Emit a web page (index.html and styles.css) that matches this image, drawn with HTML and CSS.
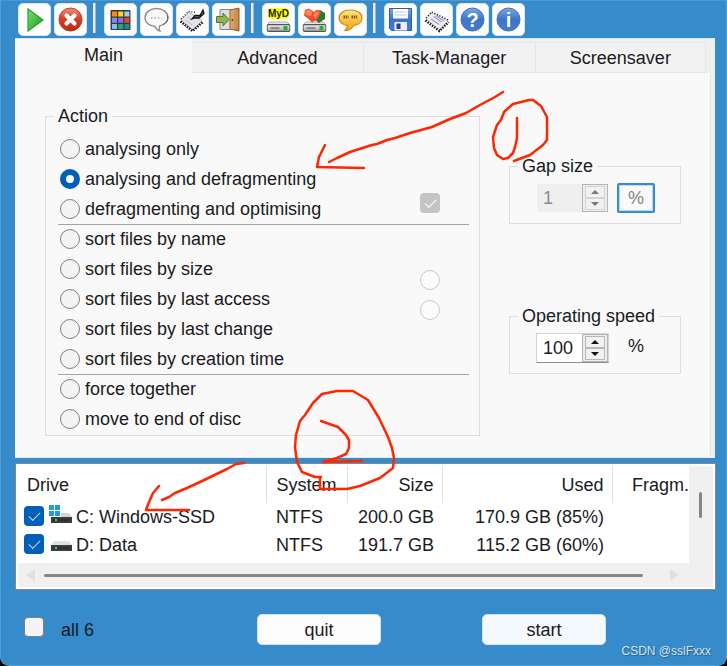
FILE: index.html
```html
<!DOCTYPE html>
<html lang="en">
<head>
<meta charset="utf-8">
<title>Defragmenter</title>
<link rel="stylesheet" href="styles.css">
</head>
<body>
<div class="window">
  <svg class="defs" aria-hidden="true">
    <defs>
      <linearGradient id="green" x2="1" y2="1"><stop stop-color="#7be07b"/><stop offset="1" stop-color="#129a16"/></linearGradient>
      <linearGradient id="red" x2="0" y2="1"><stop stop-color="#f0907c"/><stop offset=".5" stop-color="#d83a22"/><stop offset="1" stop-color="#c02a14"/></linearGradient>
      <linearGradient id="blue" x2="0" y2="1"><stop stop-color="#79a7e4"/><stop offset=".5" stop-color="#3c74c8"/><stop offset="1" stop-color="#3f7fd6"/></linearGradient>
      <linearGradient id="gold" x2="0" y2="1"><stop stop-color="#ffe489"/><stop offset="1" stop-color="#f5a300"/></linearGradient>
      <linearGradient id="wood" x2="1" y2="0"><stop stop-color="#e8b878"/><stop offset="1" stop-color="#b87838"/></linearGradient>
      <linearGradient id="metal" x2="0" y2="1"><stop stop-color="#f2f2f2"/><stop offset="1" stop-color="#a4a4a8"/></linearGradient>
      <symbol id="disk" viewBox="0 0 24 11">
        <path d="M3 1h18l2 3H1z" fill="#e4e4e6" stroke="#9a9a9e" stroke-width=".7"/>
        <rect x=".6" y="3.600" width="22.800" height="6.800" rx="1.500" fill="url(#metal)" stroke="#555" stroke-width="1.100"/>
        <path d="M4 7h9" stroke="#777" stroke-width="1.500"/><rect x="17" y="5" width="4" height="4" fill="#22b431"/>
      </symbol>
    </defs>
  </svg>

  <nav class="toolbar" aria-label="Tools">
    <button class="tool" aria-label="Start"><svg viewBox="0 0 27 27"><path d="M7 3v22L22 14z" fill="url(#green)" stroke="#2d9e32" stroke-width="1.200"/></svg></button>
    <button class="tool" aria-label="Stop"><svg viewBox="0 0 27 27"><circle cx="13.500" cy="13.500" r="11.500" fill="url(#red)" stroke="#b5432f"/><path d="M9.500 9.500l8 8m0-8l-8 8" stroke="#fff" stroke-width="4.200" stroke-linecap="round"/></svg></button>
    <span class="divider"></span>
    <button class="tool" aria-label="Colours"><svg viewBox="0 0 27 27"><rect x="3.500" y="4" width="20" height="20" rx="1" fill="#343842"/><path d="M5 5.500h5v5H5z" fill="#ff9000"/><path d="M11.200 5.500h5v5h-5z" fill="#ffd42a"/><path d="M17.400 5.500h5v5h-5z" fill="#a8ccd8"/><path d="M5 11.700h5v5H5z" fill="#7d8fe8"/><path d="M11.200 11.700h5v5h-5z" fill="#8b6fd8"/><path d="M17.400 11.700h5v5h-5z" fill="#e0452e"/><path d="M5 17.900h5v5H5z" fill="#82bdf0"/><path d="M11.200 17.900h5v5h-5z" fill="#2ba181"/><path d="M17.400 17.900h5v5h-5z" fill="#17907a"/></svg></button>
    <button class="tool" aria-label="Message"><svg viewBox="0 0 27 27"><path d="M13.500 2.500C7 2.500 2 6.500 2 11.500s4.500 8.700 10 9c1 2.500 2.500 4 5 4.500-1-1.700-1-3.500-.5-5C21.500 19 25 15.500 25 11.500c0-5-5-9-11.500-9z" fill="#f8f8f8" stroke="#8d8d8d" stroke-width="1.300"/><path d="M20 18.500c4-2 5.500-5 4.500-9" fill="none" stroke="#555"/><path d="M8 12h11" stroke="#aaa" stroke-width="1.500" stroke-dasharray="1.500 2"/></svg></button>
    <button class="tool" aria-label="Write report"><svg viewBox="0 0 27 27"><path d="M2 14L10 6l13 9-9 9z" fill="#e3e3ea" stroke="#888" stroke-width=".6"/><path d="M1.500 15.500L13.500 25l10-8.500" fill="none" stroke="#111" stroke-width="2.400" stroke-dasharray="1.500 1.200"/><path d="M2 13L9.500 5.500l7 1" fill="none" stroke="#333" stroke-width="1.400" stroke-dasharray="1 1.700"/><path d="M7 14l6 5m-4-8l4 3" stroke="#b5b5c4"/><path d="M13 13l3-3.500h5L24 4l1 3.500-5 4.500h-4z" fill="#666e94" stroke="#151515" stroke-width="1.300"/></svg></button>
    <button class="tool" aria-label="Exit"><svg viewBox="0 0 27 27"><path d="M5 3.500h16v20H5z" fill="#dedee0" stroke="#85858a"/><path d="M15 4l9-2v23l-9-2z" fill="url(#wood)" stroke="#91602f"/><path d="M17 6l5-1v16l-5-.5z" fill="none" stroke="#d79c5c"/><circle cx="17.500" cy="14" r="1" fill="#604020"/><path d="M1.500 10.500h6.500V7l6 6.500-6 6.500v-3.500H1.500z" fill="#8fb552" stroke="#557b24"/></svg></button>
    <span class="divider"></span>
    <button class="tool" aria-label="MyDefrag"><svg viewBox="0 0 27 27"><rect x="3" y="2" width="21" height="11" rx="4" fill="#ff0"/><text class="disk-name" x="13.500" y="11" text-anchor="middle">MyD</text><use href="#disk" x="1.500" y="15" width="24" height="11"/></svg></button>
    <button class="tool" aria-label="Defragment drive"><svg viewBox="0 0 27 27"><use href="#disk" x="1.500" y="15" width="24" height="11"/><path d="M15 6l4-2 5 3v6l-6 4-5-4z" fill="#2c7932"/><path d="M4 4l4-1.500L13 6l3-2.500 4 2.500-3 7-6 3.500-4-4-4-3z" fill="#f04c25"/><path d="M4.500 5l4-1.500 3 3-2 4-5-2zM12 9l4-4 2 2-4 6z" fill="#ff8564"/></svg></button>
    <button class="tool" aria-label="Comment"><svg viewBox="0 0 27 27"><path d="M13.500 4C6.500 4 2 7.500 2 12c0 3.800 4 7 8.500 7.600-.2 2-1 3.500-2.500 4.900 4-.2 7-2 8.500-5C21.500 19 25 16 25 12c0-4.500-4.500-8-11.500-8z" fill="url(#gold)" stroke="#d08a14" stroke-width="1.200"/><path d="M6.500 11h5m3 0h6" stroke="#8c6115" stroke-width="3" stroke-dasharray="1.500 .6"/></svg></button>
    <span class="divider"></span>
    <button class="tool" aria-label="Save"><svg viewBox="0 0 27 27"><path d="M2.500 2.500h22v22h-20l-2-2z" fill="url(#blue)" stroke="#2c5ca4"/><path d="M6 3h15v9.500H6z" fill="#fff"/><path d="M8 6h11M8 9h11" stroke="#b6cbe8"/><path d="M7.500 16H20v8.500H7.500z" fill="#ececf2"/><path d="M9.500 17.500h4V23h-4z" fill="#27457c"/></svg></button>
    <button class="tool" aria-label="Memory"><svg viewBox="0 0 27 27"><path d="M3 13L9 7l16 8-8 9z" fill="#eeeef0" stroke="#aaa" stroke-width=".6"/><path d="M2.500 14.500L16.500 25l9-9" fill="none" stroke="#111" stroke-width="2.400" stroke-dasharray="1.400 1.300"/><path d="M3 12L8.500 6l17 8" fill="none" stroke="#222" stroke-width="1.400" stroke-dasharray="1.200 1.600"/><path d="M8 13l8 5.500M10.500 10.500l8 5.500M13 10l8 5" stroke="#9c9ccc" stroke-width="1.300"/></svg></button>
    <button class="tool" aria-label="Help"><svg viewBox="0 0 27 27"><circle cx="13.500" cy="13.500" r="11.500" fill="url(#blue)" stroke="#4774b4"/><text class="glyph" x="13.500" y="20.500" text-anchor="middle">?</text></svg></button>
    <button class="tool" aria-label="Info"><svg viewBox="0 0 27 27"><circle cx="13.500" cy="13.500" r="11.500" fill="url(#blue)" stroke="#4774b4"/><text class="glyph" x="13.500" y="20.500" text-anchor="middle">i</text></svg></button>
  </nav>

  <main class="pane">
    <div class="tabs" role="tablist">
      <button class="tab active" role="tab" aria-selected="true">Main</button>
      <button class="tab" role="tab">Advanced</button>
      <button class="tab" role="tab">Task-Manager</button>
      <button class="tab" role="tab">Screensaver</button>
    </div>
    <div class="page">
      <fieldset class="action">
        <legend>Action</legend>
        <div class="group">
          <div class="choices">
            <label><input type="radio" name="action">analysing only</label>
            <label><input type="radio" name="action" checked>analysing and defragmenting</label>
            <label><input type="radio" name="action">defragmenting and optimising</label>
          </div>
          <div class="extra low"><input type="checkbox" checked disabled aria-label="Optimise option"></div>
        </div>
        <div class="group">
          <div class="choices">
            <label><input type="radio" name="action">sort files by name</label>
            <label><input type="radio" name="action">sort files by size</label>
            <label><input type="radio" name="action">sort files by last access</label>
            <label><input type="radio" name="action">sort files by last change</label>
            <label><input type="radio" name="action">sort files by creation time</label>
          </div>
          <div class="extra">
            <input type="radio" name="order" disabled aria-label="Ascending">
            <input type="radio" name="order" disabled aria-label="Descending">
          </div>
        </div>
        <div class="group">
          <div class="choices">
            <label><input type="radio" name="action">force together</label>
            <label><input type="radio" name="action">move to end of disc</label>
          </div>
        </div>
      </fieldset>
      <div class="settings">
        <fieldset class="setting">
          <legend>Gap size</legend>
          <div class="setting-row">
            <div class="spinner off">
              <input type="number" value="1" disabled aria-label="Gap size">
              <div class="steps"><button disabled aria-label="More"><i class="up"></i></button><button disabled aria-label="Less"><i class="down"></i></button></div>
            </div>
            <button class="percent" disabled>%</button>
          </div>
        </fieldset>
        <fieldset class="setting">
          <legend>Operating speed</legend>
          <div class="setting-row">
            <div class="spinner">
              <input type="number" value="100" aria-label="Operating speed">
              <div class="steps"><button aria-label="More"><i class="up"></i></button><button aria-label="Less"><i class="down"></i></button></div>
            </div>
            <span class="unit">%</span>
          </div>
        </fieldset>
      </div>
    </div>
  </main>

  <section class="drives">
    <div class="drives-body">
      <table>
        <colgroup><col><col class="c-system"><col class="c-size"><col class="c-used"><col class="c-fragm"></colgroup>
        <thead><tr><th>Drive</th><th>System</th><th class="num">Size</th><th class="num">Used</th><th class="last">Fragm.</th></tr></thead>
        <tbody>
          <tr>
            <td><label class="drive"><input type="checkbox" checked><svg viewBox="0 0 24 22"><path d="M0 1h5v5H0zm6 0h5v5H6zM0 7h5v5H0zm6 0h5v5H6z" fill="#1d9be8"/><path d="M12 9h8l3 4H12z" fill="#d4d4d4"/><rect x="2" y="13" width="21" height="6" fill="#3c3c3e"/><path d="M4 16h17" stroke="#202022"/><path d="M6 15h2v2H6z" fill="#45d34a"/></svg>C: Windows-SSD</label></td>
            <td>NTFS</td><td class="num">200.0 GB</td><td class="num">170.9 GB (85%)</td><td></td>
          </tr>
          <tr>
            <td><label class="drive"><input type="checkbox" checked><svg viewBox="0 0 24 22"><path d="M5 9h15l3 4H2z" fill="#e0e0e0"/><rect x="2" y="13" width="21" height="6" fill="#3c3c3e"/><path d="M4 16h17" stroke="#202022"/><path d="M6 15h2v2H6z" fill="#45d34a"/></svg>D: Data</label></td>
            <td>NTFS</td><td class="num">191.7 GB</td><td class="num">115.2 GB (60%)</td><td></td>
          </tr>
        </tbody>
      </table>
      <div class="vscroll"><div class="vthumb"></div></div>
    </div>
    <div class="hscroll"><i class="left"></i><div class="hthumb"></div><i class="right"></i></div>
  </section>

  <footer class="bottom">
    <label class="all"><input type="checkbox">all 6</label>
    <button class="push quit">quit</button>
    <button class="push start">start</button>
  </footer>

  <div class="watermark">CSDN @sslFxxx</div>

  <svg class="marks" viewBox="0 0 727 666" aria-hidden="true">
    <path d="M503 92L495 97 480 105 466 113 450 119 432 127 410 133 395 138 387 140 377 144 372 145 350 152 337 158 329 162"/>
    <path d="M325 145L319 157 317 167 364 168"/>
    <path d="M514 161L530 155 543 145 547 140V117L541 106 533 100H529L513 104 504 112 501 120 497 125 493 137 494 148 497 155 503 159 508 158 513 153 515 147 517 138V118"/>
    <path d="M244 463L236 464 227 469 200 482 187 488 175 493 169 497 162 500"/>
    <path d="M159 486L153 493 147 507 146 510H189"/>
    <path d="M321 421L338 427 346 435 349 440V448L346 454 337 458 323 462 362 461"/>
    <path d="M321 477L315 477 302 472 297 462 295 447 296 435 300 421 305 415 313 403 322 394 337 391H353L368 400 379 418 388 437 392 448 394 458 393 468 380 478 360 486 347 489H320V477"/>
  </svg>
</div>
</body>
</html>
```
FILE: styles.css
```css
* { box-sizing: border-box; }

html { background: #000; }

body {
  margin: 0;
  font: 18px/22px "Liberation Sans", Arial, sans-serif;
  color: #1a1a22;
}

button, input {
  font: inherit;
  color: inherit;
  margin: 0;
  padding: 0;
}

.window {
  position: relative;
  min-height: 100vh;
  overflow: hidden;
  background: #368bca;
  border: 1px solid #579ed3;
  border-top-color: #4b97d0;
  border-radius: 0 0 9px 9px;
  padding: 2px 10px 0 14px;
}

.defs { position: absolute; width: 0; height: 0; }

/* Toolbar */
.toolbar {
  display: flex;
  gap: 3px;
  height: 35px;
  padding-left: 3px;
}

.tool {
  width: 33px;
  height: 33px;
  padding: 2px;
  border: 1px solid #d9e4ee;
  border-radius: 5px;
  background: #fdfdfd;
}

.tool svg { display: block; width: 27px; height: 27px; }

.divider {
  width: 3px;
  height: 30px;
  margin: 0 5px 0 3px;
  background: #e8eef4;
  border-right: 1px solid #a9b3bc;
}

.glyph { font: bold 20px "Liberation Sans", Arial, sans-serif; fill: #fff; }
.disk-name { font: bold 10px "Liberation Sans", Arial, sans-serif; fill: #222; }

/* Tab pane */
.pane {
  margin-right: 1px;
  background: #f0f0f0;
  border-top: 1px solid #d5e6f3;
}

.tabs {
  display: grid;
  grid-template-columns: 177fr 171fr 172fr 170fr;
  padding-right: 9px;
  height: 34px;
}

.tab {
  margin-top: 3px;
  border: 0 solid #e6e6e6;
  border-width: 1px 1px 1px 0;
  background: #f2f2f2;
}

.tab.active {
  margin-top: 0;
  padding-bottom: 3px;
  border: 0;
  background: #f9f9f9;
}

.page {
  display: grid;
  grid-template-columns: 1fr 172px;
  gap: 29px;
  margin: 0 4px 3px 0;
  padding: 32px 29px 21px 30px;
  background: #f9f9f9;
  border-right: 1px solid #e6e6e6;
  border-bottom: 1px solid #e6e6e6;
}

fieldset {
  min-width: 0;
  margin: 0;
  padding: 0;
  border: 1px solid #dedede;
}

legend { padding: 0 4px; margin-left: 8px; }

.action { padding: 7px 0 1px; }

.group {
  display: flex;
  justify-content: space-between;
  margin: 0 10px 0 12px;
}

.group:not(:last-child) { box-shadow: 0 1px #a5a5a5; }

.choices label {
  display: flex;
  align-items: center;
  gap: 5px;
  height: 30px;
  padding-left: 2px;
}

.extra {
  display: flex;
  flex-direction: column;
  justify-content: center;
  gap: 10px;
  padding: 0 29px 8px 0;
}

.extra.low { justify-content: flex-end; padding-bottom: 11px; }

input[type="radio"], input[type="checkbox"] {
  appearance: none;
  flex: none;
  width: 20px;
  height: 20px;
  border: 1px solid #808080;
  background: #f4f4f4;
}

input[type="radio"] { border-radius: 50%; }
input[type="radio"]:checked { border: 6px solid #005fb8; background: #fff; }
input[type="radio"]:disabled { border-color: #c8c8c8; background: #fbfbfb; }

input[type="checkbox"] { border-radius: 4px; }

input[type="checkbox"]:checked {
  display: grid;
  place-items: center;
  border: 0;
  background: #005fb8;
}

input[type="checkbox"]:checked::before {
  content: "";
  width: 10px;
  height: 5px;
  margin-bottom: 3px;
  border: solid #bcd9f2;
  border-width: 0 0 1px 1px;
  transform: rotate(-45deg);
}

input[type="checkbox"]:checked:disabled { background: #c4c4c4; }
input[type="checkbox"]:checked:disabled::before { border-color: #fff; }

/* Settings */
.settings {
  display: flex;
  flex-direction: column;
  gap: 81px;
  padding-top: 50px;
}

.setting { padding: 6px 0 10px; }
.setting-row { display: flex; gap: 8px; margin-left: 26px; }

.spinner {
  display: flex;
  width: 73px;
  height: 30px;
  border: 1px solid #d4d4d4;
  border-bottom-color: #8c8c8c;
  background: #fff;
}

.spinner input {
  flex: 1;
  min-width: 0;
  padding-left: 6px;
  border: 0;
  background: transparent;
  appearance: textfield;
}

.spinner input::-webkit-inner-spin-button { appearance: none; }

.steps {
  display: flex;
  flex-direction: column;
  width: 26px;
  padding: 1px 2px;
  border: 1px solid #b4b4b8;
  background: #ededed;
}

.steps button {
  display: grid;
  place-items: center;
  flex: 1;
  min-height: 0;
  border: 1px solid #b8b8b8;
  background: #f1f1f1;
}

.up, .down { border: 4px solid transparent; }
.up { border-top: 0; border-bottom-color: #111; }
.down { border-bottom: 0; border-top-color: #111; }

.off { border-color: #f9f9f9; background: #efefef; color: #8c8c8c; }
.off .steps button { border-color: #d4d4d4; }
.off .up { border-bottom-color: #777; }
.off .down { border-top-color: #777; }

.percent {
  width: 38px;
  height: 30px;
  border: 2px solid #368bca;
  border-radius: 2px;
  background: #fafafa;
  box-shadow: inset 0 0 1px 1px #b9d7ee;
  color: #858585;
}

.unit { padding: 2px 0 0 11px; }

/* Drive list */
.drives {
  margin-top: 5px;
  padding: 2px;
  border: 1px solid #888;
  background: #fff;
}

.drives-body { display: flex; background: linear-gradient(to left, #f0f0f0 24px, #fff 24px); }

table {
  flex: 1;
  width: 100%;
  margin-bottom: 4px;
  table-layout: fixed;
  border-collapse: collapse;
  background: #fff;
}

.c-system { width: 81px; }
.c-size { width: 95px; }
.c-used { width: 170px; }
.c-fragm { width: 77px; }

th, td {
  height: 28px;
  padding: 0 8px 0 10px;
  text-align: left;
  font-weight: normal;
  white-space: nowrap;
}

th { height: 37px; border-right: 1px solid #e2e2e2; }
th:first-child { padding-left: 9px; }
th.last { border: 0; padding: 0; text-align: right; }
td:first-child { padding-left: 6px; }
th.num, td.num { text-align: right; }

.drive { display: flex; align-items: center; }
.drive input { margin-bottom: 2px; }
.drive svg { width: 24px; height: 22px; margin: 0 3px 4px 5px; }

.vscroll {
  flex: none;
  width: 24px;
  padding: 26px 10px 0;
}

.vthumb { width: 3px; height: 26px; border-radius: 2px; background: #868686; }

.hscroll {
  display: flex;
  align-items: center;
  height: 24px;
  padding: 0 34px 0 8px;
  background: #f0f0f0;
}

.hthumb { flex: 1; height: 3px; margin: 0 27px 0 9px; border-radius: 2px; background: #868686; }

.left, .right { border: 6px solid transparent; }
.left { border-left: 0; border-right: 9px solid #e0e0e0; }
.right { border-right: 0; border-left: 9px solid #e0e0e0; }

/* Footer */
.bottom {
  display: grid;
  grid-template-columns: 233fr 124px 101fr 124px 109fr;
  align-items: start;
  padding: 24px 1px 0 9px;
}

.all { display: flex; align-items: center; gap: 17px; height: 32px; }
.all input { margin-bottom: 6px; }

.push {
  height: 31px;
  border: 1px solid #d3e3f0;
  border-radius: 5px;
  background: #fdfdfd;
}

.start { grid-column: 4; background: #f4f9fd; }

/* Overlays */
.watermark {
  position: absolute;
  right: 15px;
  bottom: 5px;
  font-size: 12px;
  line-height: 18px;
  color: #d3e2ee;
  text-shadow: 1px 1px 1px #2a5c84;
}

.marks {
  position: absolute;
  top: -1px;
  left: -1px;
  width: 727px;
  height: 666px;
  pointer-events: none;
  fill: none;
  stroke: #ff2600;
  stroke-width: 2.500px;
  stroke-linecap: round;
  stroke-linejoin: round;
}
```
